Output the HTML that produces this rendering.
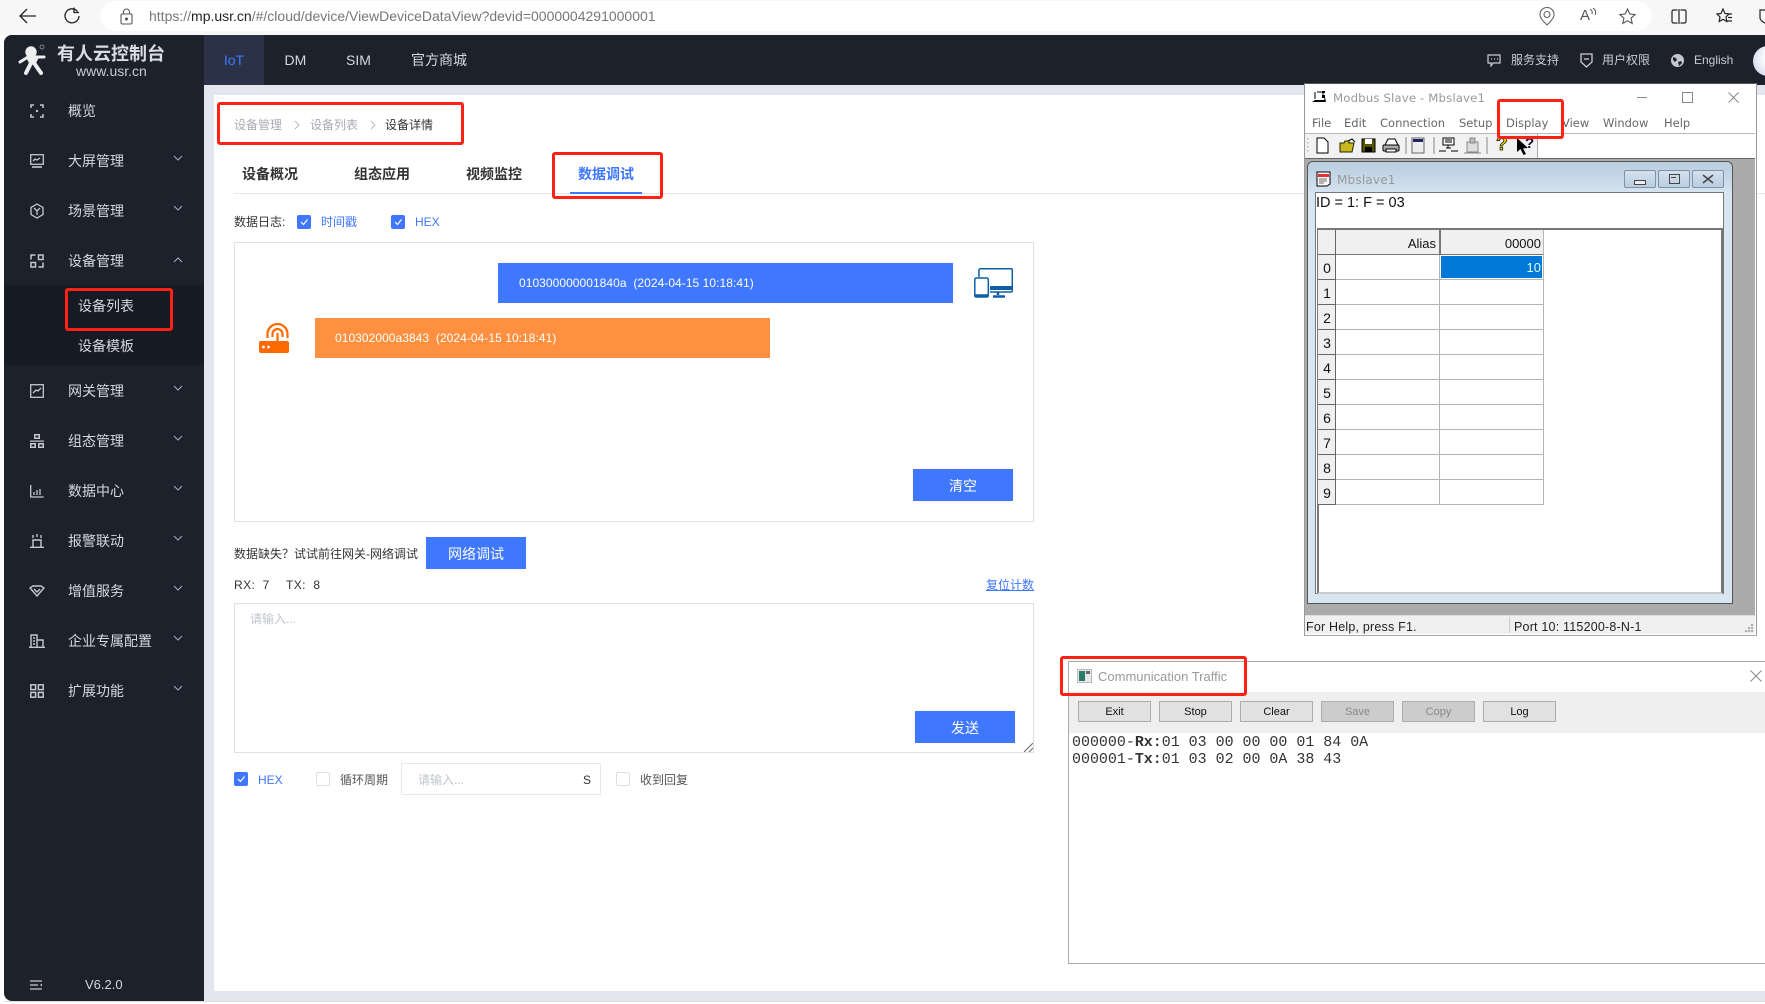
<!DOCTYPE html>
<html lang="zh"><head><meta charset="utf-8"><title>有人云控制台</title>
<style>
html,body{margin:0;padding:0;background:#fff}
body{width:1765px;height:1004px;position:relative;overflow:hidden;font-family:"Liberation Sans","Noto Sans CJK SC",sans-serif;font-size:12px;color:#333}
div,svg,span.a{position:absolute}
.t{position:absolute;white-space:nowrap;line-height:20px;height:20px}
.n{color:#d4d7de;font-size:14px}
.bt{position:absolute;background:#3f77ff;color:#fff;font-size:14px;text-align:center;width:100px;height:32px;line-height:34px}
.red{position:absolute;border:3px solid #ff2016;border-radius:3px;box-sizing:border-box;z-index:9}
.cb{position:absolute;width:14px;height:14px;box-sizing:border-box;border-radius:2px;background:#3f77ff}
.cu{position:absolute;width:14px;height:14px;box-sizing:border-box;border-radius:2px;background:#fff;border:1px solid #dcdfe6}
.cb svg{left:2px;top:2px}
.w{font-family:"DejaVu Sans",sans-serif;font-size:11.5px;color:#666}
.gl{position:absolute;background:#b5b5b5}
.rn{position:absolute;left:1319px;width:16px;height:24px;background:#f0f0f0;border-right:1px solid #666;border-bottom:1px solid #666;box-sizing:content-box;font:14px/27px "Liberation Sans",sans-serif;color:#111;text-align:center;padding-left:1px;margin-left:-1px}
.cbtn{position:absolute;top:701px;height:21px;width:73px;box-sizing:border-box;background:#e1e1e1;border:1px solid #adadad;font-size:11px;line-height:21px;text-align:center;color:#111}
.dis{background:#ccc;color:#888}
.mbtn{position:absolute;top:170px;height:18px;width:32px;box-sizing:border-box;border:1px solid #7f93a8;border-radius:2px;background:linear-gradient(#d5e1ed,#b9cde0)}
</style></head><body>

<!-- browser chrome -->
<div style="left:0;top:0;width:1765px;height:35px;background:#f7f7f7"></div>
<div style="left:100px;top:1px;width:1552px;height:30px;background:#fff;border-radius:15px"></div>
<svg style="left:18px;top:7px" width="20" height="18" viewBox="0 0 20 18" fill="none" stroke="#222" stroke-width="1.3"><path d="M18 9H2M9 2L2 9l7 7"/></svg>
<svg style="left:63px;top:6px" width="18" height="20" viewBox="0 0 18 20" fill="none" stroke="#222" stroke-width="1.3"><path d="M14.5 5.5A7 7 0 1 0 16 10"/><path d="M11 1.5v5h5"/></svg>
<svg style="left:120px;top:8px" width="13" height="17" viewBox="0 0 13 17" fill="none" stroke="#555" stroke-width="1.1"><rect x="1" y="6" width="11" height="10" rx="1.5"/><path d="M3.5 6V4a3 3 0 0 1 6 0v2"/><circle cx="6.5" cy="11" r="1" fill="#555"/></svg>
<div class="t" style="left:149px;top:6px;font-size:14px;color:#777">https://<span style="color:#222">mp.usr.cn</span>/#/cloud/device/ViewDeviceDataView?devid=0000004291000001</div>
<svg style="left:1539px;top:7px" width="16" height="19" viewBox="0 0 16 19" fill="none" stroke="#666" stroke-width="1.1"><path d="M8 18C4 14 1 11 1 7.5a7 7 0 0 1 14 0C15 11 12 14 8 18z"/><circle cx="8" cy="7.5" r="3"/></svg>
<div class="t" style="left:1580px;top:6px;font-size:15px;color:#555">A</div>
<svg style="left:1589px;top:8px" width="8" height="10" viewBox="0 0 8 10" fill="none" stroke="#555"><path d="M1 1q3 2 2 5M4 0q4 3 2 7"/></svg>
<svg style="left:1619px;top:8px" width="17" height="17" viewBox="0 0 17 17" fill="none" stroke="#555" stroke-width="1.1"><path d="M8.5 1l2.3 5 5.2.6-3.9 3.5 1.1 5.3-4.7-2.7-4.7 2.7 1.1-5.3L1 6.6 6.2 6z"/></svg>
<svg style="left:1671px;top:9px" width="16" height="15" viewBox="0 0 16 15" fill="none" stroke="#222" stroke-width="1.2"><path d="M6.500 1H2.500A1.500 1.500 0 0 0 1 2.500v10A1.500 1.500 0 0 0 2.500 14H6.500M9.500 1h4A1.500 1.500 0 0 1 15 2.500v10a1.500 1.500 0 0 1-1.500 1.500h-4"/><path d="M8 0v15"/></svg>
<svg style="left:1716px;top:8px" width="17" height="17" viewBox="0 0 17 17" fill="none" stroke="#222" stroke-width="1.2"><path d="M7 1l2 4.500 4 .5-3 3 .8 4.500L7 11.300 3.200 13.500 4 9 1 6l4-.5z"/><path d="M12 6h4M12 9.500h4M11 13h5"/></svg>
<svg style="left:1759px;top:9px" width="8" height="16" viewBox="0 0 8 16" fill="none" stroke="#222" stroke-width="1.200"><path d="M8 1H1v8q0 3 7 6"/></svg>

<!-- app frame -->
<div style="left:4px;top:35px;width:1761px;height:50px;background:#1c212c;border-radius:8px 0 0 0"></div>
<div style="left:4px;top:35px;width:200px;height:966px;background:#1c212c;border-radius:8px 0 0 8px"></div>
<div style="left:204px;top:85px;width:1561px;height:906px;background:#e3e6ee"></div>
<div style="left:204px;top:991px;width:1561px;height:10px;background:#e3e6ee"></div>
<div style="left:4px;top:1001px;width:1761px;height:1px;background:#dcdcdc"></div>
<div style="left:214px;top:95px;width:1551px;height:896px;background:#fff"></div>
<div style="left:204px;top:35px;width:60px;height:50px;background:#2b3146"></div>

<!-- logo -->
<svg style="left:15px;top:40px" width="34" height="36" viewBox="0 0 34 36" fill="none" stroke="#eee" stroke-linecap="round" stroke-linejoin="round"><circle cx="16" cy="12" r="5.700" fill="#eee" stroke="none"/><path d="M5 22l8-5h16" stroke-width="3"/><path d="M12 18h11l-3 6h-5z" fill="#eee" stroke-width="1"/><path d="M16 23l-5 10M19 23l7 10" stroke-width="4"/><circle cx="27" cy="7" r="2" stroke="#999" stroke-width=".8"/></svg>
<div class="t" style="left:57px;top:44px;font-size:18px;font-weight:700;color:#d9dce2">有人云控制台</div>
<div class="t" style="left:76px;top:61px;font-size:14px;color:#c7ccd6">www.usr.cn</div>

<!-- top nav -->
<div class="t" style="left:204px;width:60px;text-align:center;top:50px;font-size:14px;color:#3f77ff">IoT</div>
<div class="t n" style="left:284.500px;top:50px">DM</div>
<div class="t n" style="left:346px;top:50px">SIM</div>
<div class="t n" style="left:411px;top:50px">官方商城</div>
<svg style="left:1487px;top:54px" width="14" height="13" viewBox="0 0 14 13" fill="none" stroke="#ccc" stroke-width="1.200"><path d="M1 1h12v8H6l-2 3V9H1z"/><path d="M4 5h1M7 5h1M10 5h1"/></svg>
<div class="t" style="left:1511px;top:50px;color:#c9ccd3">服务支持</div>
<svg style="left:1580px;top:53px" width="13" height="15" viewBox="0 0 13 15" fill="none" stroke="#ccc" stroke-width="1.300"><path d="M1 1h11v8l-5.500 5L1 9z"/><path d="M4 6h5"/></svg>
<div class="t" style="left:1602px;top:50px;color:#c9ccd3">用户权限</div>
<svg style="left:1671px;top:54px" width="13" height="13" viewBox="0 0 13 13"><circle cx="6.500" cy="6.500" r="6.500" fill="#c4c7cd"/><path d="M2 3l3 1 1 2-2 2-2-2zM7 8l3-1 1 2-3 3z" fill="#1c212c"/></svg>
<div class="t" style="left:1694px;top:50px;color:#c9ccd3">English</div>
<div style="left:1753px;top:46px;width:30px;height:30px;border-radius:50%;background:radial-gradient(circle at 70% 40%,#fff 30%,#c4cfe6 100%)"></div>

<!-- sidebar -->
<div style="left:4px;top:285px;width:200px;height:80px;background:#161a23"></div>
<svg style="left:30px;top:104px" width="14" height="14" viewBox="0 0 14 14" fill="none" stroke="#c5c8ce" stroke-width="1.500"><path d="M1 4V1h3M10 1h3v3M13 10v3h-3M4 13H1v-3"/><circle cx="7" cy="7" r="1.200" fill="#c5c8ce" stroke="none"/></svg>
<div class="t n" style="left:68px;top:101px">概览</div>

<svg style="left:30px;top:154px" width="14" height="15" viewBox="0 0 14 15" fill="none" stroke="#c5c8ce" stroke-width="1.300"><rect x=".7" y=".7" width="12.600" height="9.600"/><path d="M3 7l2-2 2 1 3-2"/><path d="M2 13h10" stroke-width="1.600"/></svg>
<div class="t n" style="left:68px;top:151px">大屏管理</div>
<svg style="left:173px;top:155px" width="10" height="6" viewBox="0 0 10 6" fill="none" stroke="#aab" stroke-width="1"><path d="M1 1l4 4 4-4"/></svg>

<svg style="left:30px;top:203px" width="14" height="16" viewBox="0 0 14 16" fill="none" stroke="#c5c8ce" stroke-width="1.300"><path d="M7 1l6 3.500v7L7 15l-6-3.500v-7z"/><path d="M4 5l3 3 3-3M7 8v4"/></svg>
<div class="t n" style="left:68px;top:201px">场景管理</div>
<svg style="left:173px;top:205px" width="10" height="6" viewBox="0 0 10 6" fill="none" stroke="#aab" stroke-width="1"><path d="M1 1l4 4 4-4"/></svg>

<svg style="left:30px;top:254px" width="14" height="14" viewBox="0 0 14 14" fill="none" stroke="#c5c8ce" stroke-width="1.500"><rect x="8.500" y="1" width="4.500" height="4.500"/><rect x="1" y="8.500" width="4.500" height="4.500"/><path d="M1 5.500V1h4.500M13 8.500V13H8.500"/></svg>
<div class="t n" style="left:68px;top:251px">设备管理</div>
<svg style="left:173px;top:257px" width="10" height="6" viewBox="0 0 10 6" fill="none" stroke="#aab" stroke-width="1"><path d="M1 5l4-4 4 4"/></svg>

<div class="t n" style="left:78px;top:296px">设备列表</div>
<div class="t n" style="left:78px;top:336px">设备模板</div>

<svg style="left:30px;top:384px" width="14" height="14" viewBox="0 0 14 14" fill="none" stroke="#c5c8ce" stroke-width="1.300"><rect x=".7" y=".7" width="12.600" height="12.600"/><path d="M3 9l3-3 2 1 3-3"/></svg>
<div class="t n" style="left:68px;top:381px">网关管理</div>
<svg style="left:173px;top:385px" width="10" height="6" viewBox="0 0 10 6" fill="none" stroke="#aab" stroke-width="1"><path d="M1 1l4 4 4-4"/></svg>

<svg style="left:30px;top:434px" width="14" height="14" viewBox="0 0 14 14" fill="#c5c8ce"><path d="M4 0h6v5H4zM5.500 1.500v2h3v-2zM0 6.500h14v1.300H0zM0 9h6v5H0zM1.500 10.500V12.500H4.500V10.500zM8 9h6v5H8zM9.500 10.500v2h3v-2z" fill-rule="evenodd"/></svg>
<div class="t n" style="left:68px;top:431px">组态管理</div>
<svg style="left:173px;top:435px" width="10" height="6" viewBox="0 0 10 6" fill="none" stroke="#aab" stroke-width="1"><path d="M1 1l4 4 4-4"/></svg>

<svg style="left:30px;top:484px" width="14" height="14" viewBox="0 0 14 14" fill="none" stroke="#c5c8ce" stroke-width="1.300"><path d="M.7 1v12h13M4 8v3M7 6v5M10 5v6"/></svg>
<div class="t n" style="left:68px;top:481px">数据中心</div>
<svg style="left:173px;top:485px" width="10" height="6" viewBox="0 0 10 6" fill="none" stroke="#aab" stroke-width="1"><path d="M1 1l4 4 4-4"/></svg>

<svg style="left:30px;top:534px" width="14" height="14" viewBox="0 0 14 14" fill="none" stroke="#c5c8ce" stroke-width="1.400"><path d="M3 1v3M7 0v3M11 1v3M3 13V6h8v7M0 13.300h14"/></svg>
<div class="t n" style="left:68px;top:531px">报警联动</div>
<svg style="left:173px;top:535px" width="10" height="6" viewBox="0 0 10 6" fill="none" stroke="#aab" stroke-width="1"><path d="M1 1l4 4 4-4"/></svg>

<svg style="left:29px;top:585px" width="16" height="12" viewBox="0 0 16 12" fill="none" stroke="#c5c8ce" stroke-width="1.400"><path d="M1 3l3-2h8l3 2-7 8z"/><path d="M5 4l3 3 3-3"/></svg>
<div class="t n" style="left:68px;top:581px">增值服务</div>
<svg style="left:173px;top:585px" width="10" height="6" viewBox="0 0 10 6" fill="none" stroke="#aab" stroke-width="1"><path d="M1 1l4 4 4-4"/></svg>

<svg style="left:29px;top:634px" width="16" height="14" viewBox="0 0 16 14" fill="none" stroke="#c5c8ce" stroke-width="1.400"><path d="M2 13V1h6v12M8 6h6v7M0 13.300h16M4 4h2M4 7h2M4 10h2"/></svg>
<div class="t n" style="left:68px;top:631px">企业专属配置</div>
<svg style="left:173px;top:635px" width="10" height="6" viewBox="0 0 10 6" fill="none" stroke="#aab" stroke-width="1"><path d="M1 1l4 4 4-4"/></svg>

<svg style="left:30px;top:684px" width="14" height="14" viewBox="0 0 14 14" fill="none" stroke="#c5c8ce" stroke-width="1.500"><rect x=".8" y=".8" width="4.800" height="4.800"/><rect x="8.400" y=".8" width="4.800" height="4.800"/><rect x=".8" y="8.400" width="4.800" height="4.800"/><rect x="8.400" y="8.400" width="4.800" height="4.800"/></svg>
<div class="t n" style="left:68px;top:681px">扩展功能</div>
<svg style="left:173px;top:685px" width="10" height="6" viewBox="0 0 10 6" fill="none" stroke="#aab" stroke-width="1"><path d="M1 1l4 4 4-4"/></svg>

<svg style="left:30px;top:980px" width="12" height="10" viewBox="0 0 12 10" fill="none" stroke="#c5c8ce" stroke-width="1.300"><path d="M0 1h12M0 5h8M0 9h12"/><path d="M12 3.500L10 5l2 1.500z" fill="#c5c8ce" stroke="none"/></svg>
<div class="t" style="left:85px;top:975px;font-size:13px;color:#d4d7de">V6.2.0</div>

<!-- breadcrumb -->
<div class="t" style="left:234px;top:115px;color:#a9abb0">设备管理</div>
<svg style="left:294px;top:120px" width="6" height="10" viewBox="0 0 6 10" fill="none" stroke="#bbb"><path d="M1 1l4 4-4 4"/></svg>
<div class="t" style="left:310px;top:115px;color:#a9abb0">设备列表</div>
<svg style="left:370px;top:120px" width="6" height="10" viewBox="0 0 6 10" fill="none" stroke="#bbb"><path d="M1 1l4 4-4 4"/></svg>
<div class="t" style="left:385px;top:115px;color:#333">设备详情</div>

<!-- tabs -->
<div style="left:234px;top:193px;width:1080px;height:1px;background:#e8e8e8"></div>
<div style="left:1700px;top:193px;width:65px;height:1px;background:#e8e8e8"></div>
<div class="t" style="left:242px;top:164px;font-size:14px;font-weight:700;color:#333">设备概况</div>
<div class="t" style="left:354px;top:164px;font-size:14px;font-weight:700;color:#333">组态应用</div>
<div class="t" style="left:466px;top:164px;font-size:14px;font-weight:700;color:#333">视频监控</div>
<div class="t" style="left:578px;top:164px;font-size:14px;font-weight:700;color:#3f77ff">数据调试</div>
<div style="left:570px;top:192px;width:72px;height:2px;background:#3f77ff"></div>

<!-- options -->
<div class="t" style="left:234px;top:212px;color:#333">数据日志:</div>
<div class="cb" style="left:297px;top:215px"><svg width="10" height="10" viewBox="0 0 10 10" fill="none" stroke="#fff" stroke-width="1.200"><path d="M2 5l2.500 2.500L8.500 2.500"/></svg></div>
<div class="t" style="left:321px;top:212px;color:#3f77ff">时间戳</div>
<div class="cb" style="left:391px;top:215px"><svg width="10" height="10" viewBox="0 0 10 10" fill="none" stroke="#fff" stroke-width="1.200"><path d="M2 5l2.500 2.500L8.500 2.500"/></svg></div>
<div class="t" style="left:415px;top:212px;color:#3f77ff">HEX</div>

<!-- log box -->
<div style="left:234px;top:242px;width:798px;height:278px;border:1px solid #dfe1ea"></div>
<div style="left:498px;top:263px;width:455px;height:40px;background:#3f77ff"></div>
<div class="t" style="left:519px;top:273px;color:#fff;white-space:pre;letter-spacing:.05px">010300000001840a  (2024-04-15 10:18:41)</div>
<svg style="left:974px;top:268px" width="39" height="30" viewBox="0 0 39 30" fill="none" stroke="#0f5fa8" stroke-width="1.500"><path d="M5 9V2a1.500 1.500 0 0 1 1.500-1.200h31a.8.800 0 0 1 .8.800V23a1 1 0 0 1-1 1H16"/><path d="M16 20h22.500" stroke-width="4"/><path d="M24 24v3M19 28.500h12" stroke-width="2.500"/><rect x=".8" y="10" width="13.500" height="19" rx="1.500"/><path d="M1 27.500h13" stroke-width="2.500"/></svg>
<div style="left:315px;top:318px;width:455px;height:40px;background:#ff9040"></div>
<div class="t" style="left:335px;top:328px;color:#fff;white-space:pre;letter-spacing:.05px">010302000a3843  (2024-04-15 10:18:41)</div>
<svg style="left:259px;top:323px" width="31" height="30" viewBox="0 0 31 30"><g fill="none" stroke="#ff6a00" stroke-width="2.200"><path d="M8.500 15V11a10 10 0 0 1 20 0V15"/><path d="M13.500 14V11a5 5 0 0 1 10 0V14"/><path d="M18.500 10V19"/></g><path d="M2 18h26a2 2 0 0 1 2 2v8a2 2 0 0 1-2 2H2a2 2 0 0 1-2-2v-8a2 2 0 0 1 2-2z" fill="#ff6a00"/><circle cx="4.500" cy="24" r="1.400" fill="#fff"/><circle cx="9.500" cy="24" r="1.400" fill="#fff"/></svg>
<div class="bt" style="left:913px;top:469px">清空</div>

<!-- mid -->
<div class="t" style="left:234px;top:544px;color:#333">数据缺失？试试前往网关-网络调试</div>
<div class="bt" style="left:426px;top:537px">网络调试</div>
<div class="t" style="left:234px;top:575px;color:#333;white-space:pre;letter-spacing:.4px">RX:  7</div>
<div class="t" style="left:286px;top:575px;color:#333;white-space:pre;letter-spacing:.4px">TX:  8</div>
<div class="t" style="left:986px;top:575px;color:#3f77ff;text-decoration:underline">复位计数</div>

<div style="left:234px;top:603px;width:798px;height:148px;border:1px solid #dfe1ea"></div>
<div class="t" style="left:250px;top:609px;color:#c0c4cc">请输入...</div>
<div class="bt" style="left:915px;top:711px">发送</div>
<svg style="left:1024px;top:743px" width="9" height="9" viewBox="0 0 9 9" stroke="#666" fill="none"><path d="M0 9L9 0M5 9l4-4"/></svg>

<!-- bottom row -->
<div class="cb" style="left:234px;top:772px"><svg width="10" height="10" viewBox="0 0 10 10" fill="none" stroke="#fff" stroke-width="1.200"><path d="M2 5l2.500 2.500L8.500 2.500"/></svg></div>
<div class="t" style="left:258px;top:770px;color:#3f77ff">HEX</div>
<div class="cu" style="left:316px;top:772px"></div>
<div class="t" style="left:340px;top:770px;color:#555">循环周期</div>
<div style="left:401px;top:763px;width:198px;height:30px;border:1px solid #e6e8ee"></div>
<div class="t" style="left:418px;top:770px;color:#c0c4cc">请输入...</div>
<div class="t" style="left:583px;top:770px;color:#333">S</div>
<div class="cu" style="left:616px;top:772px"></div>
<div class="t" style="left:640px;top:770px;color:#555">收到回复</div>

<!-- Modbus window -->
<div style="left:1304px;top:83px;width:451px;height:551px;background:#fff;border:1px solid #9a9a9a;border-top-color:#555;border-bottom:1px solid #aaa;box-sizing:content-box"></div>
<svg style="left:1312px;top:90px" width="15" height="13" viewBox="0 0 15 13" fill="#000"><path d="M0 12l3-2h9l1-3 1 5zM2 2h3M10 1h3v2h-3zM10 5h3v3h-3z"/><path d="M5 2h5M11 3v2M3 2v7" stroke="#000" fill="none"/></svg>
<div class="t w" style="left:1333px;top:88px;font-size:11.800px;color:#9a9a9a;letter-spacing:.1px">Modbus Slave - Mbslave1</div>
<div style="left:1637px;top:97px;width:10px;height:1px;background:#888"></div>
<div style="left:1682px;top:92px;width:9px;height:9px;border:1px solid #888"></div>
<svg style="left:1728px;top:92px" width="11" height="11" viewBox="0 0 11 11" stroke="#888" fill="none"><path d="M.5.500l10 10M10.500.500l-10 10"/></svg>
<div class="t w" style="left:1312px;top:113px">File</div>
<div class="t w" style="left:1344px;top:113px">Edit</div>
<div class="t w" style="left:1380px;top:113px">Connection</div>
<div class="t w" style="left:1459px;top:113px">Setup</div>
<div class="t w" style="left:1506px;top:113px">Display</div>
<div class="t w" style="left:1562px;top:113px">View</div>
<div class="t w" style="left:1603px;top:113px">Window</div>
<div class="t w" style="left:1664px;top:113px">Help</div>
<div style="left:1305px;top:133px;width:450px;height:1px;background:#b8b8b8"></div>
<div style="left:1305px;top:134px;width:232px;height:24px;background:#f2f2f2;border-right:1px solid #aaa"></div>
<!-- toolbar icons -->
<svg style="left:1305px;top:137px" width="10" height="18" viewBox="0 0 10 18" fill="#bbb"><rect x="2" y="1" width="1.500" height="1.500"/><rect x="2" y="5" width="1.500" height="1.500"/><rect x="2" y="9" width="1.500" height="1.500"/><rect x="2" y="13" width="1.500" height="1.500"/></svg>
<svg style="left:1316px;top:137px" width="225" height="18" viewBox="0 0 225 18">
<path d="M1 1h7l4 4v11H1z" fill="#fff" stroke="#000"/>
<path d="M24 15V6h4l1-2h4v2h5l-2 9z" fill="#c8b820" stroke="#220"/><path d="M32 4l4-2 3 3" stroke="#000" fill="none"/>
<rect x="46" y="2" width="13" height="13" fill="#555500" stroke="#000"/><rect x="49" y="2" width="7" height="5" fill="#fff"/><rect x="49" y="10" width="7" height="5" fill="#000"/>
<path d="M69 8l3-6h7l3 6z" fill="#fff" stroke="#000"/><rect x="67" y="8" width="16" height="6" rx="1" fill="#aaa" stroke="#000"/><rect x="70" y="12" width="10" height="3" fill="#fff" stroke="#000"/>
<path d="M90 0v17M118 0v17M171 0v17" stroke="#888"/>
<rect x="96" y="1" width="12" height="15" fill="#eee" stroke="#666"/><rect x="97" y="2" width="10" height="3" fill="#226"/>
<rect x="127" y="1" width="11" height="7" fill="#fff" stroke="#000"/><path d="M129 3h7M129 5h7M132 8v3M123 14h7M135 14h7M130 11h5" stroke="#000" fill="none"/>
<rect x="151" y="5" width="11" height="10" fill="#ddd" stroke="#888"/><rect x="154" y="1" width="5" height="5" fill="#bbb" stroke="#888"/><path d="M148 16h17" stroke="#888"/>
</svg>
<div class="t" style="left:1496px;top:135px;font:bold 19px/20px 'Liberation Sans';color:#dd0;-webkit-text-stroke:.7px #000">?</div>
<svg style="left:1516px;top:137px" width="13" height="18" viewBox="0 0 13 18"><path d="M1 1l11 10-5 .5 3 5.500-2.500 1-3-6-3.500 3z"/></svg>
<div class="t" style="left:1525px;top:134px;font:bold 15px/20px 'Liberation Sans';color:#113">?</div>

<!-- MDI -->
<div style="left:1305px;top:158px;width:450px;height:457px;background:#ababab;border-top:1px solid #666;box-sizing:border-box"></div>
<div style="left:1307px;top:161px;width:426px;height:443px;background:#d8e6f2;border:1px solid #555;border-radius:6px 6px 0 0;box-sizing:border-box"></div>
<div style="left:1308px;top:162px;width:424px;height:30px;background:linear-gradient(#b8cde0,#d5e2ef);border-radius:6px 6px 0 0"></div>
<svg style="left:1316px;top:171px" width="15" height="16" viewBox="0 0 15 16"><path d="M1 1h13v12l-3 2H1z" fill="#fff" stroke="#000"/><rect x="2" y="3" width="11" height="3" fill="#e03030"/><path d="M3 8h8M3 10h8M3 12h5" stroke="#666"/></svg>
<div class="t w" style="left:1337px;top:170px;font-size:12px;color:#999;letter-spacing:.2px">Mbslave1</div>
<div class="mbtn" style="left:1624px"><div style="left:9px;top:9px;width:10px;height:3px;border:1px solid #444;background:#eee"></div></div>
<div class="mbtn" style="left:1658px"><div style="left:10px;top:3px;width:9px;height:8px;border:1px solid #444"></div><div style="left:12px;top:6px;width:5px;height:1px;background:#444"></div></div>
<div class="mbtn" style="left:1692px"><svg style="left:9px;top:3px" width="12" height="10" viewBox="0 0 12 10" stroke="#444" stroke-width="1.600" fill="none"><path d="M1 1l10 8M11 1L1 9"/></svg></div>

<div style="left:1315px;top:192px;width:409px;height:402px;background:#fff;border:1px solid #777;box-sizing:border-box"></div>
<div class="t" style="left:1316px;top:193px;font-size:14.500px;color:#111">ID = 1: F = 03</div>
<div style="left:1317px;top:228px;width:406px;height:366px;box-sizing:border-box;border:2px solid #777;border-bottom-color:#ccc;border-right-color:#777;background:#fff"></div>

<!-- grid -->
<div style="left:1319px;top:230px;width:224px;height:24px;background:#f0f0f0"></div>
<div style="left:1335px;top:254px;width:208px;height:1px;background:#777"></div>
<div style="left:1439px;top:230px;width:2px;height:24px;background:#777"></div>
<div class="gl" style="left:1543px;top:230px;width:1px;height:275px"></div>
<div class="gl" style="left:1439px;top:255px;width:1px;height:250px"></div>
<div class="gl" style="left:1335px;top:279px;width:208px;height:1px"></div>
<div class="gl" style="left:1335px;top:304px;width:208px;height:1px"></div>
<div class="gl" style="left:1335px;top:329px;width:208px;height:1px"></div>
<div class="gl" style="left:1335px;top:354px;width:208px;height:1px"></div>
<div class="gl" style="left:1335px;top:379px;width:208px;height:1px"></div>
<div class="gl" style="left:1335px;top:404px;width:208px;height:1px"></div>
<div class="gl" style="left:1335px;top:429px;width:208px;height:1px"></div>
<div class="gl" style="left:1335px;top:454px;width:208px;height:1px"></div>
<div class="gl" style="left:1335px;top:479px;width:208px;height:1px"></div>
<div class="gl" style="left:1335px;top:504px;width:208px;height:1px"></div>
<div class="t" style="left:1339px;width:97px;text-align:right;top:234px;font-size:13px;color:#111">Alias</div>
<div class="t" style="left:1441px;width:100px;text-align:right;top:234px;font-size:13px;color:#111">00000</div>
<div style="left:1441px;top:256px;width:101px;height:22px;background:#0078d7"></div>
<div class="t" style="left:1441px;width:100px;text-align:right;top:258px;font-size:13px;color:#dff">10</div>
<div class="rn" style="top:230px"></div>
<div class="rn" style="top:255px">0</div>
<div class="rn" style="top:280px">1</div>
<div class="rn" style="top:305px">2</div>
<div class="rn" style="top:330px">3</div>
<div class="rn" style="top:355px">4</div>
<div class="rn" style="top:380px">5</div>
<div class="rn" style="top:405px">6</div>
<div class="rn" style="top:430px">7</div>
<div class="rn" style="top:455px">8</div>
<div class="rn" style="top:480px">9</div>

<!-- status -->
<div style="left:1305px;top:615px;width:450px;height:19px;background:#f0f0f0;border-top:1px solid #ddd;box-sizing:border-box"></div>
<div style="left:1509px;top:617px;width:1px;height:16px;background:#ccc"></div>
<div class="t" style="left:1306px;top:617px;font-size:12.500px;color:#222;letter-spacing:.2px">For Help, press F1.</div>
<div class="t" style="left:1514px;top:617px;font-size:12.500px;color:#222;letter-spacing:.2px">Port 10: 115200-8-N-1</div>
<svg style="left:1744px;top:623px" width="10" height="10" viewBox="0 0 10 10" fill="#aaa"><rect x="7" y="1" width="2" height="2"/><rect x="4" y="4" width="2" height="2"/><rect x="7" y="4" width="2" height="2"/><rect x="1" y="7" width="2" height="2"/><rect x="4" y="7" width="2" height="2"/><rect x="7" y="7" width="2" height="2"/></svg>

<!-- Comm window -->
<div style="left:1068px;top:661px;width:700px;height:303px;background:#fff;border:1px solid #aaa;box-sizing:border-box"></div>
<div style="left:1069px;top:692px;width:696px;height:41px;background:#efefef"></div>
<svg style="left:1077px;top:669px" width="15" height="14" viewBox="0 0 15 14"><rect x=".5" y=".5" width="14" height="13" fill="#e8e8e8" stroke="#bbb"/><rect x="2" y="2" width="6" height="10" fill="#2a7a6a"/><rect x="9" y="2" width="4" height="3" fill="#667"/></svg>
<div class="t" style="left:1098px;top:667px;font-size:13px;color:#999">Communication Traffic</div>
<svg style="left:1750px;top:670px" width="12" height="12" viewBox="0 0 12 12" stroke="#888" fill="none"><path d="M.5.500l11 11M11.500.500l-11 11"/></svg>
<div class="cbtn" style="left:1078px">Exit</div>
<div class="cbtn" style="left:1159px">Stop</div>
<div class="cbtn" style="left:1240px">Clear</div>
<div class="cbtn dis" style="left:1321px">Save</div>
<div class="cbtn dis" style="left:1402px">Copy</div>
<div class="cbtn" style="left:1483px">Log</div>
<div class="t" style="left:1072px;top:733px;font:14.960px/20px 'Liberation Mono',monospace;color:#333;white-space:pre">000000-<b>Rx:</b>01 03 00 00 00 01 84 0A</div>
<div class="t" style="left:1072px;top:750px;font:14.960px/20px 'Liberation Mono',monospace;color:#333;white-space:pre">000001-<b>Tx:</b>01 03 02 00 0A 38 43</div>

<!-- red boxes -->
<div class="red" style="left:217px;top:102px;width:247px;height:43px"></div>
<div class="red" style="left:552px;top:152px;width:111px;height:47px"></div>
<div class="red" style="left:65px;top:288px;width:108px;height:43px"></div>
<div class="red" style="left:1497px;top:99px;width:67px;height:40px"></div>
<div class="red" style="left:1060px;top:656px;width:187px;height:40px"></div>
</body></html>
